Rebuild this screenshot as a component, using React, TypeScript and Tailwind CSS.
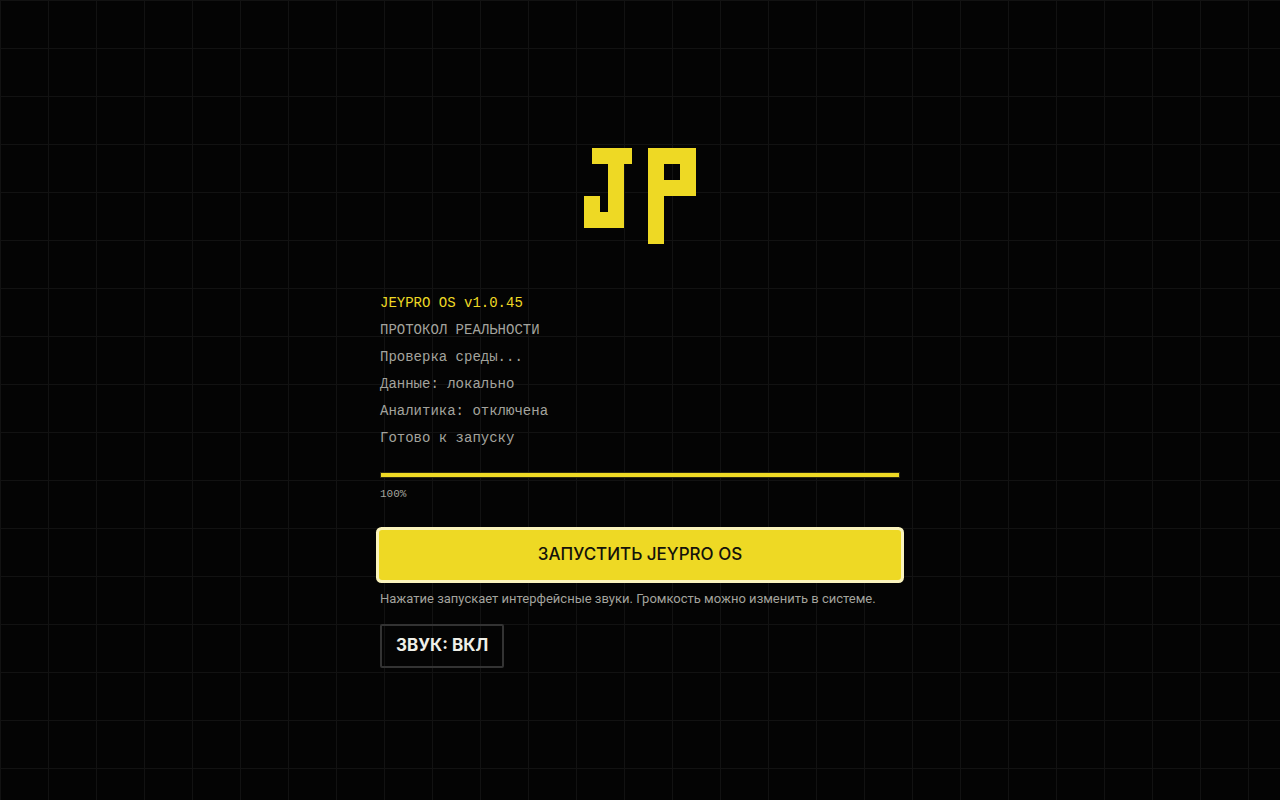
import { useState } from 'react'

const bootLines = [
  'ПРОТОКОЛ РЕАЛЬНОСТИ',
  'Проверка среды...',
  'Данные: локально',
  'Аналитика: отключена',
  'Готово к запуску',
]

function Logo() {
  return (
    <svg className="mx-auto block h-32 w-32" viewBox="0 0 128 128" fill="#eed924" shapeRendering="crispEdges" role="img" aria-label="JP">
      <path d="M16 16h40v16h-8v64H8V64h16v16h8V32H16z" />
      <path fillRule="evenodd" d="M72 16h48v48H88v48H72zM88 32v16h16V32z" />
    </svg>
  )
}

export default function App() {
  const [soundOn, setSoundOn] = useState(true)
  const progress = 100

  return (
    <main className="flex min-h-screen items-center justify-center bg-[#040404] bg-[linear-gradient(#121212_1px,transparent_1px),linear-gradient(90deg,#121212_1px,transparent_1px)] bg-size-[48px_48px] px-4">
      <div className="w-full max-w-[520px]">
        <Logo />

        {/* Boot log */}
        <div className="mt-[30px] font-['Liberation_Mono',monospace] text-sm leading-[27px] text-[#a3a39d]">
          <p className="text-[#eed924]">JEYPRO OS v1.0.45</p>
          {bootLines.map(line => (
            <p key={line}>{line}</p>
          ))}
        </div>

        {/* Progress */}
        <div
          className="mt-5 h-[6px] border border-[#2a2810] bg-[#111111]"
          role="progressbar"
          aria-label="Загрузка"
          aria-valuenow={progress}
        >
          <div className="h-full bg-[#eed924]" style={{ width: `${progress}%` }} />
        </div>
        <p className="mt-2 font-['Liberation_Mono',monospace] text-[11px] leading-4 text-[#a3a39d]">{progress}%</p>

        <button className="mt-[29px] h-12 w-full rounded-xs bg-[#eed924] font-[Inter,sans-serif] text-[17px] font-medium text-[#14120a] shadow-[0_0_0_1px_#eed924,0_0_0_4px_#fbf4bd] outline-none">
          ЗАПУСТИТЬ JEYPRO OS
        </button>
        <p className="mt-[10px] font-[Roboto,sans-serif] text-[13px] leading-5 text-[#a3a39d]">
          Нажатие запускает интерфейсные звуки. Громкость можно изменить в системе.
        </p>

        <button
          className="mt-[15px] h-11 rounded-xs border-2 border-[#333333] px-[14px] font-[Inter,sans-serif] text-[17px] font-bold text-[#efefe8]"
          aria-pressed={soundOn}
          onClick={() => setSoundOn(!soundOn)}
        >
          ЗВУК: {soundOn ? 'ВКЛ' : 'ВЫКЛ'}
        </button>
      </div>
    </main>
  )
}
